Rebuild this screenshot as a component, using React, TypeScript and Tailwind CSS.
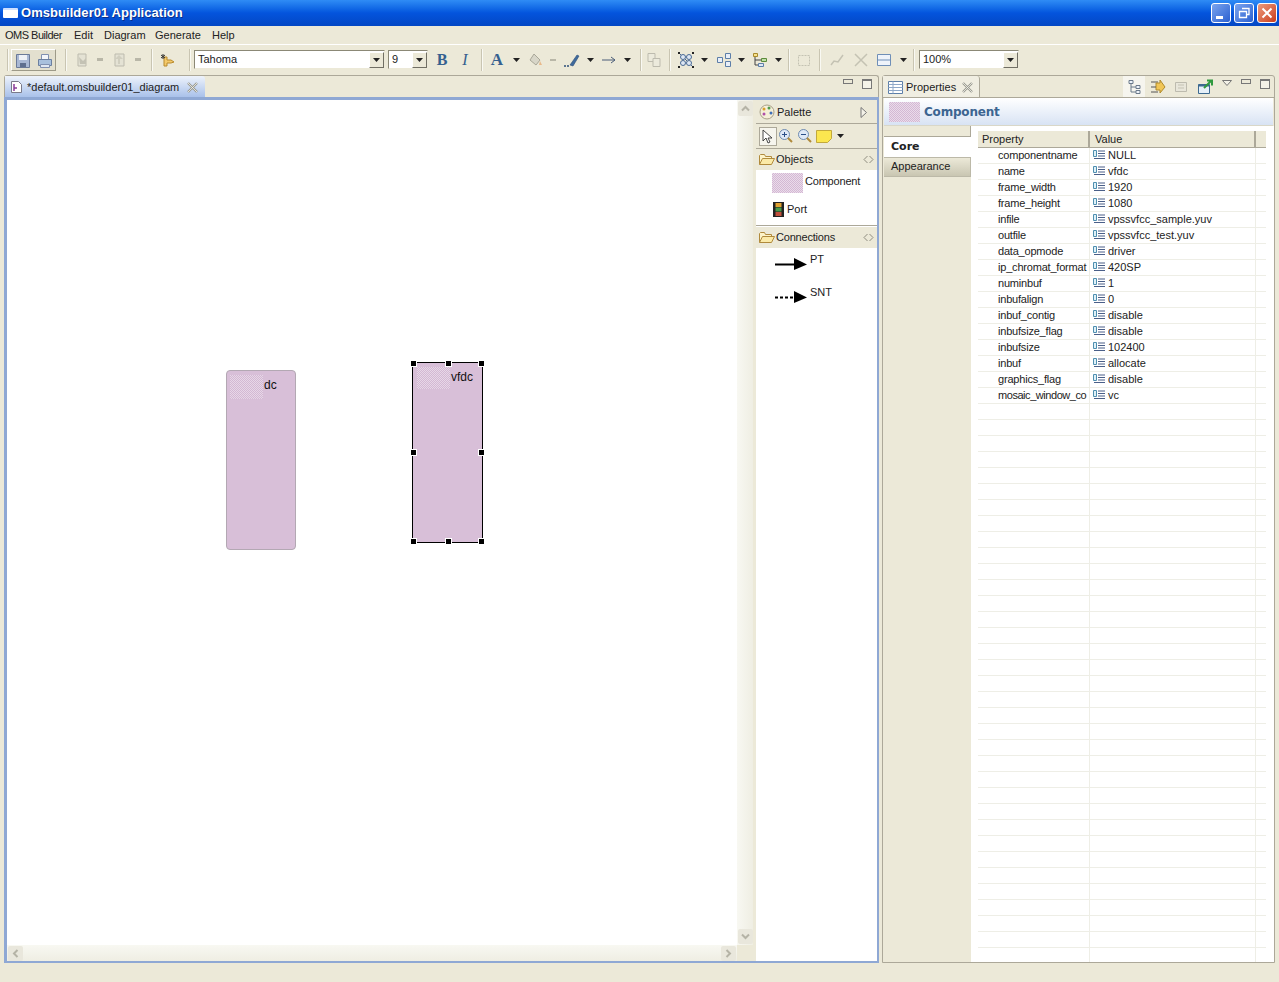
import React from 'react';

const props: [string, string][] = [
  ['componentname', 'NULL'],
  ['name', 'vfdc'],
  ['frame_width', '1920'],
  ['frame_height', '1080'],
  ['infile', 'vpssvfcc_sample.yuv'],
  ['outfile', 'vpssvfcc_test.yuv'],
  ['data_opmode', 'driver'],
  ['ip_chromat_format', '420SP'],
  ['numinbuf', '1'],
  ['inbufalign', '0'],
  ['inbuf_contig', 'disable'],
  ['inbufsize_flag', 'disable'],
  ['inbufsize', '102400'],
  ['inbuf', 'allocate'],
  ['graphics_flag', 'disable'],
  ['mosaic_window_co', 'vc'],
];
const emptyRows = Array.from({ length: 35 }, (_, i) => i);

const Caret = () => (
  <svg width="7" height="4" viewBox="0 0 7 4" className="shrink-0">
    <path d="M0 0h7L3.5 4z" fill="#222" />
  </svg>
);

const Sep = ({ w }: { w: number }) => (
  <div className="flex h-[22px] shrink-0 justify-center" style={{ width: w }}>
    <div className="h-full w-[2px] border-l border-[#c9c5b2] bg-white/70" />
  </div>
);

const Slot = ({ w, children }: { w: number; children?: React.ReactNode }) => (
  <div className="flex h-[22px] shrink-0 items-center justify-center" style={{ width: w }}>
    {children}
  </div>
);

const Combo = ({ w, text }: { w: number; text: string }) => (
  <div className="flex h-[19px] items-center border border-[#8b8876] border-r-[#ece9d8] border-b-[#ece9d8] bg-white pl-[3px]" style={{ width: w }}>
    <span className="flex-1 text-[11px] leading-none text-[#222]">{text}</span>
    <div className="flex h-[16px] w-[15px] items-center justify-center border border-[#fff] border-r-[#716f64] border-b-[#716f64] bg-[#ece9d8]">
      <Caret />
    </div>
  </div>
);

const Ico = ({ children, w = 16, h = 16 }: { children: React.ReactNode; w?: number; h?: number }) => (
  <svg width={w} height={h} viewBox={`0 0 ${w} ${h}`} className="shrink-0">
    {children}
  </svg>
);

const Toolbar = () => (
  <div className="flex h-[29px] items-center pl-[5px]">
    <Sep w={5} />
    <div className="ml-[1px] flex h-[22px] w-[45px] border border-[#fff] border-r-[#9d9a88] border-b-[#9d9a88] bg-[#e3e0cf]">
      <Slot w={22}>
        <Ico>
          <path d="M1.5 1.5h13v13h-13z" fill="#a9b8d4" stroke="#6b7a98" />
          <path d="M4 2h8v5H4z" fill="#eef1f6" />
          <path d="M5 10h6v4H5z" fill="#5f6f8f" />
        </Ico>
      </Slot>
      <Slot w={22}>
        <Ico>
          <path d="M4.5 1.5h7v5h-7z" fill="#f4f6fa" stroke="#8090b0" />
          <path d="M1.5 6.5h13v6h-13z" fill="#a8c0dd" stroke="#6b7f9f" />
          <path d="M3.5 11.5h9v3h-9z" fill="#dfe7f2" stroke="#8090b0" />
        </Ico>
      </Slot>
    </div>
    <Sep w={19} />
    <Slot w={16}>
      <Ico>
        <path d="M3 2h8v12H3z" fill="#e4e2d4" stroke="#bdbbae" />
        <path d="M4 5l4 4 3-3v6H5z" fill="#c4c2b4" />
      </Ico>
    </Slot>
    <Slot w={18}><div className="h-[3px] w-[6px] bg-[#b9b7a8]" /></Slot>
    <Slot w={19}>
      <Ico>
        <path d="M4 2h9v12H4z" fill="#e4e2d4" stroke="#bdbbae" />
        <path d="M8 3l4 4H9v5H7V7H4z" fill="#d0cebf" />
      </Ico>
    </Slot>
    <Slot w={19}><div className="h-[3px] w-[6px] bg-[#b9b7a8]" /></Slot>
    <Sep w={10} />
    <Slot w={24}>
      <Ico w={18} h={14}>
        <path d="M8 7h4V4h3v9h-3v-3H8l-3-1z" fill="#f3c96b" stroke="#b98a2c" transform="matrix(-1 0 0 1 19 0)" />
        <path d="M3 1v5M1 2l4 3M5 2L1 5" stroke="#333" strokeWidth="1" />
      </Ico>
    </Slot>
    <Slot w={5} />
    <Sep w={8} />
    <Combo w={191} text="Tahoma" />
    <div className="ml-[3px]">
      <Combo w={40} text="9" />
    </div>
    <Slot w={28}><span className="font-['Liberation_Serif',serif] text-[16px] font-bold text-[#35608f]">B</span></Slot>
    <Slot w={18}><span className="font-['Liberation_Serif',serif] text-[16px] italic text-[#35608f]">I</span></Slot>
    <Sep w={16} />
    <Slot w={14}><span className="font-['Liberation_Serif',serif] text-[17px] font-bold text-[#35608f]">A</span></Slot>
    <Slot w={24}><Caret /></Slot>
    <Slot w={14}>
      <Ico>
        <path d="M7 2l6 6-4 5-6-5z" fill="#d8d6c8" stroke="#a9a798" />
        <path d="M13 9l2 4h-3z" fill="#e8b98a" />
      </Ico>
    </Slot>
    <Slot w={22}><div className="h-[2px] w-[6px] bg-[#b9b7a8]" /></Slot>
    <Slot w={16}>
      <Ico>
        <path d="M6 13L13 3l2 1-6 10z" fill="#3f6a9c" stroke="#2d4f78" strokeWidth=".6" />
        <path d="M0 14h5" stroke="#2d4f78" strokeWidth="1.4" strokeDasharray="2 1" />
      </Ico>
    </Slot>
    <Slot w={21}><Caret /></Slot>
    <Slot w={16}>
      <Ico>
        <path d="M1 8h13M10 5l4 3-4 3" fill="none" stroke="#4a5d78" />
      </Ico>
    </Slot>
    <Slot w={21}><Caret /></Slot>
    <Sep w={5} />
    <Slot w={21}>
      <Ico>
        <path d="M2 1.500h7v8H2z" fill="#eceadc" stroke="#bdbbae" />
        <path d="M7 6.500h7v8H7z" fill="#eceadc" stroke="#bdbbae" />
      </Ico>
    </Slot>
    <Sep w={11} />
    <Slot w={21}>
      <Ico>
        <path d="M2 2l12 12" stroke="#4a6a94" />
        <circle cx="5" cy="5" r="2.500" fill="#dfe8f4" stroke="#4a6a94" />
        <circle cx="11" cy="5" r="2.500" fill="#dfe8f4" stroke="#4a6a94" />
        <circle cx="5" cy="11" r="2.500" fill="#dfe8f4" stroke="#4a6a94" />
        <circle cx="11" cy="11" r="2.500" fill="#dfe8f4" stroke="#4a6a94" />
        <path d="M0 0h2v2H0zM14 0h2v2h-2zM0 14h2v2H0zM14 14h2v2h-2z" fill="#222" />
      </Ico>
    </Slot>
    <Slot w={17}><Caret /></Slot>
    <Slot w={21}>
      <Ico>
        <path d="M1.500 5.500h5v5h-5zM9.500 1.500h5v5h-5zM9.500 9.500h5v5h-5z" fill="#e8eef7" stroke="#5c7ea8" />
      </Ico>
    </Slot>
    <Slot w={15}><Caret /></Slot>
    <Slot w={21}>
      <Ico>
        <path d="M1.500 1.500h4v3h-4z" fill="#f7e08a" stroke="#a88a2c" />
        <path d="M9.500 6.500h5v3h-5z" fill="#bfe0a8" stroke="#5c8a3c" />
        <path d="M6.500 11.500h5v3h-5z" fill="#dfe8f4" stroke="#5c7ea8" />
        <path d="M3 5v8h3M3 8h6" fill="none" stroke="#444" />
      </Ico>
    </Slot>
    <Slot w={17}><Caret /></Slot>
    <Sep w={3} />
    <Slot w={28}>
      <Ico>
        <path d="M2.500 3.500h11v10h-11z" fill="none" stroke="#c4c2b3" strokeDasharray="2 1" />
      </Ico>
    </Slot>
    <Sep w={4} />
    <Slot w={30}>
      <Ico>
        <path d="M2 13l3-4 4 1 5-7" fill="none" stroke="#c4c2b3" strokeWidth="1.500" />
      </Ico>
    </Slot>
    <Slot w={18}>
      <Ico>
        <path d="M2 2l12 12M14 2L2 14" stroke="#c4c2b3" strokeWidth="1.500" />
      </Ico>
    </Slot>
    <Slot w={28}>
      <Ico>
        <path d="M1.500 2.500h13v11h-13z" fill="#eef3fa" stroke="#6f8fb7" />
        <path d="M1.500 8h13" stroke="#6f8fb7" />
      </Ico>
    </Slot>
    <Slot w={10}><Caret /></Slot>
    <Sep w={11} />
    <Combo w={100} text="100%" />
  </div>
);

const MinMax = () => (
  <div className="flex items-start gap-[9px]">
    <div className="h-[5px] w-[10px] border border-[#777]" />
    <div className="h-[10px] w-[10px] border border-[#777] border-t-2 bg-[#f4f2e8]" />
  </div>
);

const CloseX = () => (
  <Ico w={11} h={11}>
    <path d="M1 1l9 9M10 1l-9 9" stroke="#9a9a90" strokeWidth="2.400" />
    <path d="M1 1l9 9M10 1l-9 9" stroke="#f4f4ee" strokeWidth=".8" />
  </Ico>
);

const Handle = ({ className }: { className: string }) => (
  <div className={`absolute box-content h-[5px] w-[5px] border border-white bg-black ${className}`} />
);

const Dotted = ({ className }: { className: string }) => (
  <div className={`bg-[repeating-conic-gradient(#d4b8d4_0_25%,#eadcea_0_50%)] bg-[length:2px_2px] ${className}`} />
);

const Canvas = () => (
  <div className="relative flex-1 bg-white">
    <div className="absolute left-[219px] top-[270px] h-[180px] w-[70px] rounded-[4px] border border-[#b3a8b3] bg-[#d8bfd8]">
      <div className="absolute left-[3px] top-[4px] h-[24px] w-[33px] bg-[repeating-conic-gradient(#d3b8d3_0_25%,#e7d7e7_0_50%)] bg-[length:2px_2px]" />
      <span className="absolute left-[37px] top-[7px] text-[12px] leading-[14px] text-[#111]">dc</span>
    </div>
    <div className="absolute left-[405px] top-[262px] h-[181px] w-[71px] border border-black bg-[#d8bfd8]">
      <div className="absolute left-[4px] top-[4px] h-[22px] w-[33px] bg-[repeating-conic-gradient(#d3b8d3_0_25%,#e7d7e7_0_50%)] bg-[length:2px_2px]" />
      <span className="absolute left-[38px] top-[7px] text-[12px] leading-[14px] text-[#111]">vfdc</span>
      <Handle className="left-[-3px] top-[-3px]" />
      <Handle className="left-[32px] top-[-3px]" />
      <Handle className="right-[-3px] top-[-3px]" />
      <Handle className="left-[-3px] top-[86px]" />
      <Handle className="right-[-3px] top-[86px]" />
      <Handle className="bottom-[-3px] left-[-3px]" />
      <Handle className="bottom-[-3px] left-[32px]" />
      <Handle className="bottom-[-3px] right-[-3px]" />
    </div>
  </div>
);

const ScrollBtn = ({ d }: { d: string }) => (
  <div className="flex h-[15px] w-[15px] items-center justify-center rounded-[2px] bg-[#e9e7dc]">
    <Ico w={9} h={9}>
      <path d={d} fill="none" stroke="#b5b3a6" strokeWidth="2" />
    </Ico>
  </div>
);

const Folder = () => (
  <Ico w={16} h={13}>
    <path d="M.5 11.500v-9l1-1h4l1 2h6v2" fill="#fdf3c8" stroke="#b08a3c" />
    <path d="M.5 11.500l3-6h12l-3 6z" fill="#fbeaa8" stroke="#b08a3c" />
  </Ico>
);

const Collapse = () => (
  <Ico w={11} h={9}>
    <path d="M4.500 1L1 4.500 4.500 8M6.500 1L10 4.500 6.500 8" fill="none" stroke="#8f8d80" />
  </Ico>
);

const Palette = () => (
  <div className="flex w-[122px] shrink-0 flex-col border-l border-[#ece9d8] bg-white text-[11px] text-[#222]">
    <div className="flex h-[24px] items-center border-b border-[#aca899] bg-[#ece9d8] pl-[3px] pr-[9px] pt-[1px]">
      <Ico>
        <circle cx="8" cy="8" r="7" fill="#f5efd8" stroke="#a9a088" />
        <circle cx="5" cy="5" r="1.500" fill="#d9a12c" />
        <circle cx="10" cy="4" r="1.500" fill="#4f9a4a" />
        <circle cx="12" cy="9" r="1.500" fill="#3e6fb8" />
        <circle cx="5" cy="10" r="1.500" fill="#b04fa8" />
      </Ico>
      <span className="ml-[2px] flex-1">Palette</span>
      <Ico w={8} h={11}>
        <path d="M1 .5L6.500 5.500 1 10.500z" fill="#f4f2e8" stroke="#777" />
      </Ico>
    </div>
    <div className="flex h-[25px] items-center border-b border-[#aca899] bg-[#ece9d8] pl-[3px]">
      <div className="flex h-[19px] w-[18px] items-center justify-center border border-[#aca899] bg-[#f6f5ee]">
        <Ico w={12} h={15}>
          <path d="M1 1v11l3-3 2 5 2-1-2-4h4z" fill="#fff" stroke="#333" strokeWidth=".9" />
        </Ico>
      </div>
      <div className="ml-[1px]">
        <Ico>
          <circle cx="6.500" cy="6.500" r="5" fill="#dfe9f6" stroke="#6e8bb0" />
          <path d="M4 6.500h5M6.500 4v5" stroke="#2a4f88" />
          <path d="M10 10l4 4" stroke="#b08a3c" strokeWidth="2" />
        </Ico>
      </div>
      <div className="ml-[3px]">
        <Ico>
          <circle cx="6.500" cy="6.500" r="5" fill="#dfe9f6" stroke="#6e8bb0" />
          <path d="M4 6.500h5" stroke="#2a4f88" />
          <path d="M10 10l4 4" stroke="#b08a3c" strokeWidth="2" />
        </Ico>
      </div>
      <div className="ml-[3px]">
        <Ico w={17} h={14}>
          <path d="M.5 1.500h15v8l-4 4H.5z" fill="#fbe64f" stroke="#c2a93c" />
        </Ico>
      </div>
      <div className="ml-[4px]"><Caret /></div>
    </div>
    <div className="flex h-[21px] items-center bg-[#ece9d8] px-[3px]">
      <Folder />
      <span className="ml-[1px] flex-1">Objects</span>
      <Collapse />
    </div>
    <div className="h-[56px] border-b border-[#aca899]">
      <div className="flex pl-[16px] pt-[3px]">
        <Dotted className="h-[20px] w-[31px]" />
        <span className="ml-[2px] mt-[1px] leading-[14px] tracking-[-0.2px]">Component</span>
      </div>
      <div className="mt-[9px] flex h-[14px] items-center pl-[17px]">
        <Ico w={11} h={15}>
          <rect width="11" height="15" fill="#222" />
          <rect x="2.500" y="1" width="6" height="4" fill="#e0a030" />
          <rect x="2.500" y="5.500" width="6" height="4" fill="#4a9a4a" />
          <rect x="2.500" y="10" width="6" height="4" fill="#c0503c" />
        </Ico>
        <span className="ml-[3px]">Port</span>
      </div>
    </div>
    <div className="mt-[1px] flex h-[21px] items-center bg-[#ece9d8] px-[3px]">
      <Folder />
      <span className="ml-[1px] flex-1 tracking-[-0.2px]">Connections</span>
      <Collapse />
    </div>
    <div className="flex pl-[19px] pt-[9px]">
      <Ico w={32} h={14}>
        <path d="M0 7.500h20" stroke="#000" strokeWidth="2" />
        <path d="M19 1l13 6.500L19 13z" fill="#000" />
      </Ico>
      <span className="ml-[3px] mt-[-5px] leading-[14px]">PT</span>
    </div>
    <div className="flex pl-[19px] pt-[19px]">
      <Ico w={32} h={14}>
        <path d="M0 7.500h20" stroke="#000" strokeWidth="2" strokeDasharray="3 2" />
        <path d="M19 1l13 6.500L19 13z" fill="#000" />
      </Ico>
      <span className="ml-[3px] mt-[-5px] leading-[14px]">SNT</span>
    </div>
  </div>
);

const EditorPane = () => (
  <div className="flex h-full w-[875px] flex-col">
    <div className="flex h-[22px] rounded-t-[3px] border border-b-0 border-[#aca899]">
      <div className="flex h-full w-[200px] items-center rounded-tr-[3px] bg-gradient-to-b from-[#eef3fb] to-[#a9c1ea] pl-[5px] pt-[1px] text-[11px] text-[#222]">
        <Ico w={13} h={14}>
          <path d="M1.500 1.500h7l3 3v8h-10z" fill="#fff" stroke="#7a7a8a" />
          <path d="M4 4v7M4 8h3" stroke="#8a3c9a" strokeWidth="1.500" />
        </Ico>
        <span className="ml-[4px] w-[154px]">*default.omsbuilder01_diagram</span>
        <div className="ml-[6px]"><CloseX /></div>
      </div>
      <div className="flex flex-1 items-start justify-end pr-[6px] pt-[3px]">
        <MinMax />
      </div>
    </div>
    <div className="flex min-h-0 flex-1 border-[2px] border-l-[3px] border-t-[3px] border-[#8fa8d4]">
      <div className="flex flex-1 flex-col bg-[#ece9d8]">
        <div className="flex min-h-0 flex-1">
          <Canvas />
          <div className="flex w-[16px] flex-col items-center justify-between bg-gradient-to-r from-[#f8f8f2] to-[#efeee3] py-[1px]">
            <ScrollBtn d="M1 6.500L4.500 3 8 6.500" />
            <ScrollBtn d="M1 2.500L4.500 6 8 2.500" />
          </div>
        </div>
        <div className="flex h-[16px]">
          <div className="flex flex-1 items-center justify-between bg-gradient-to-b from-[#f8f8f2] to-[#efeee3] px-[1px]">
            <ScrollBtn d="M6.500 1L3 4.500 6.500 8" />
            <ScrollBtn d="M2.500 1L6 4.500 2.500 8" />
          </div>
          <div className="w-[16px]" />
        </div>
      </div>
      <div className="w-[2px] bg-[#ece9d8]" />
      <Palette />
    </div>
  </div>
);

const PropertiesPane = () => (
  <div className="ml-[3px] flex h-full w-[393px] flex-col rounded-t-[3px] border border-[#aca899] text-[11px] text-[#222]">
    <div className="flex h-[22px] items-stretch border-b border-[#aca899]">
      <div className="flex w-[97px] items-center rounded-tr-[3px] border-r border-[#aca899] bg-[#f0eee2] pl-[5px] pt-[1px] text-[11px]">
        <Ico w={15} h={13}>
          <path d="M.5.500h14v12H.5z" fill="#fff" stroke="#5c7ea8" />
          <path d="M.5 3.500h14M.5 6.500h14M.5 9.500h14M5 .5v12" stroke="#8fa8c8" />
        </Ico>
        <span className="ml-[3px]">Properties</span>
        <div className="ml-[6px]"><CloseX /></div>
      </div>
      <div className="flex flex-1 items-center pl-[143px]">
        <div className="flex h-[21px] w-[22px] items-center justify-center bg-[#f6f5ee] pl-[2px]">
          <Ico w={14} h={14}>
            <path d="M3 3v9h6M3 7h6" fill="none" stroke="#6b7a8a" />
            <path d="M1 .500h4v3H1zM8 5.500h4v3H8zM8 10.500h4v3H8z" fill="#eef3fa" stroke="#6b7a8a" />
          </Ico>
        </div>
        <div className="ml-[1px] flex w-[23px] justify-center">
          <Ico>
            <path d="M1 3h7M1 13h7" stroke="#555" />
            <path d="M6 4h4V1l5 7-5 6v-3H6z" fill="#f1c656" stroke="#b08a2c" />
            <path d="M1 8h5" stroke="#555" />
          </Ico>
        </div>
        <div className="flex w-[23px] justify-center">
          <Ico w={14} h={14}>
            <path d="M1.500 2.500h11v9h-11z" fill="#e8e6da" stroke="#bdbbae" />
            <path d="M4 5h6M4 8h6" stroke="#c4c2b3" />
          </Ico>
        </div>
        <div className="flex w-[25px] justify-center">
          <Ico>
            <path d="M1.500 5.500h11v9h-11z" fill="#e6f0f8" stroke="#3d6a90" />
            <path d="M1.500 5.500h11v2h-11z" fill="#3d6a90" />
            <path d="M7 9l7-7M10 1.500h5v5" fill="none" stroke="#2f9a3f" strokeWidth="2" />
          </Ico>
        </div>
        <div className="mb-[8px] ml-[5px]">
          <Ico w={10} h={6}>
            <path d="M.5.500h9L5 5.500z" fill="#f4f2e8" stroke="#777" />
          </Ico>
        </div>
        <div className="ml-[9px] mt-[3px] self-start"><MinMax /></div>
      </div>
    </div>
    <div className="mx-[1px] flex h-[28px] items-center border-b border-[#d9d7c8] bg-gradient-to-b from-white to-[#d8e3f4] pl-[5px] pt-[1px]">
      <Dotted className="h-[20px] w-[31px]" />
      <span className="ml-[4px] font-['DejaVu_Sans',sans-serif] text-[12px] font-bold tracking-[-0.2px] text-[#3c6591]">Component</span>
    </div>
    <div className="flex min-h-0 flex-1">
      <div className="w-[88px] shrink-0 pl-[1px] text-[11px]">
        <div className="h-[11px] border-b border-r border-[#aca899]" />
        <div className="flex h-[20px] items-center bg-white pl-[7px] font-['DejaVu_Sans',sans-serif] text-[11px] font-bold">Core</div>
        <div className="flex h-[20px] items-center border-y border-r border-[#bcb9a8] bg-gradient-to-b from-[#ece9d8] to-[#c9c6b2] pb-[2px] pl-[7px]">Appearance</div>
      </div>
      <div className="flex-1 overflow-hidden bg-white pl-[7px] pr-[8px] pt-[5px]">
        <div className="flex h-[17px] border-b border-[#aca899] bg-[#ece9d8] leading-[16px]">
          <div className="w-[112px] border-r-2 border-[#aca899] pl-[4px]">Property</div>
          <div className="w-[166px] border-r-2 border-[#aca899] pl-[5px]">Value</div>
        </div>
        {props.map(([name, value]) => (
          <div key={name} className="flex h-[16px] border-b border-[#eeeee6] leading-[15px]">
            <div className={`w-[112px] whitespace-nowrap border-r border-[#eeeee6] pl-[20px] ${name === 'mosaic_window_co' ? 'tracking-[-0.45px]' : 'tracking-[-0.2px]'}`}>{name}</div>
            <div className="flex w-[166px] border-r border-[#eeeee6] pl-[3px]">
              <div className="mr-[2px] mt-[1px]">
                <Ico w={13} h={11}>
                  <path d="M.5 1.500h3v6h-3z" fill="#dff0f8" stroke="#4f8fb0" />
                  <path d="M5 2h7M5 4.500h7M5 7h7M1 9.500h11" stroke="#4a5f88" />
                </Ico>
              </div>
              <span>{value}</span>
            </div>
          </div>
        ))}
        {emptyRows.map((i) => (
          <div key={i} className="flex h-[16px] border-b border-[#eeeee6]">
            <div className="w-[112px] border-r border-[#eeeee6]" />
            <div className="w-[166px] border-r border-[#eeeee6]" />
          </div>
        ))}
      </div>
    </div>
  </div>
);

export default function App() {
  return (
    <div className="flex h-[982px] w-[1279px] flex-col overflow-hidden bg-[#ece9d8] font-['Liberation_Sans',sans-serif]">
      <div className="flex h-[26px] items-center bg-gradient-to-b from-[#2f8cf5] via-[#0454dd] to-[#0347c4] pl-[3px] pr-[2px]">
        <div className="h-[10px] w-[15px] rounded-[1px] border-t-2 border-[#cfe0ff] bg-white" />
        <span className="ml-[3px] flex-1 text-[13px] font-bold tracking-[0.05px] text-white [text-shadow:1px_1px_#0a2f8a]">Omsbuilder01 Application</span>
        <div className="flex gap-[3px]">
          <div className="flex h-[20px] w-[20px] items-end rounded-[3px] border border-white bg-gradient-to-br from-[#7ba4ee] to-[#2a5fd0] pb-[3px] pl-[4px]">
            <div className="h-[3px] w-[7px] bg-white" />
          </div>
          <div className="flex h-[20px] w-[20px] items-center justify-center rounded-[3px] border border-white bg-gradient-to-br from-[#7ba4ee] to-[#2a5fd0]">
            <Ico w={12} h={12}>
              <path d="M4 1.500h7v6H9M1.500 4.500h7v6h-7z" fill="none" stroke="#fff" strokeWidth="1.300" />
            </Ico>
          </div>
          <div className="flex h-[20px] w-[20px] items-center justify-center rounded-[3px] border border-white bg-gradient-to-br from-[#ec9a7c] to-[#c93a16]">
            <Ico w={12} h={12}>
              <path d="M1.500 1.500l9 9M10.500 1.500l-9 9" stroke="#fff" strokeWidth="2" />
            </Ico>
          </div>
        </div>
      </div>
      <div className="flex h-[19px] items-center border-b border-white pl-[5px] text-[11px] text-[#222]">
        <span className="w-[69px] tracking-[-0.5px]">OMS Builder</span>
        <span className="w-[30px]">Edit</span>
        <span className="w-[51px]">Diagram</span>
        <span className="w-[57px]">Generate</span>
        <span>Help</span>
      </div>
      <Toolbar />
      <div className="flex h-[889px] pl-[4px] pt-[1px]">
        <EditorPane />
        <PropertiesPane />
      </div>
    </div>
  );
}
